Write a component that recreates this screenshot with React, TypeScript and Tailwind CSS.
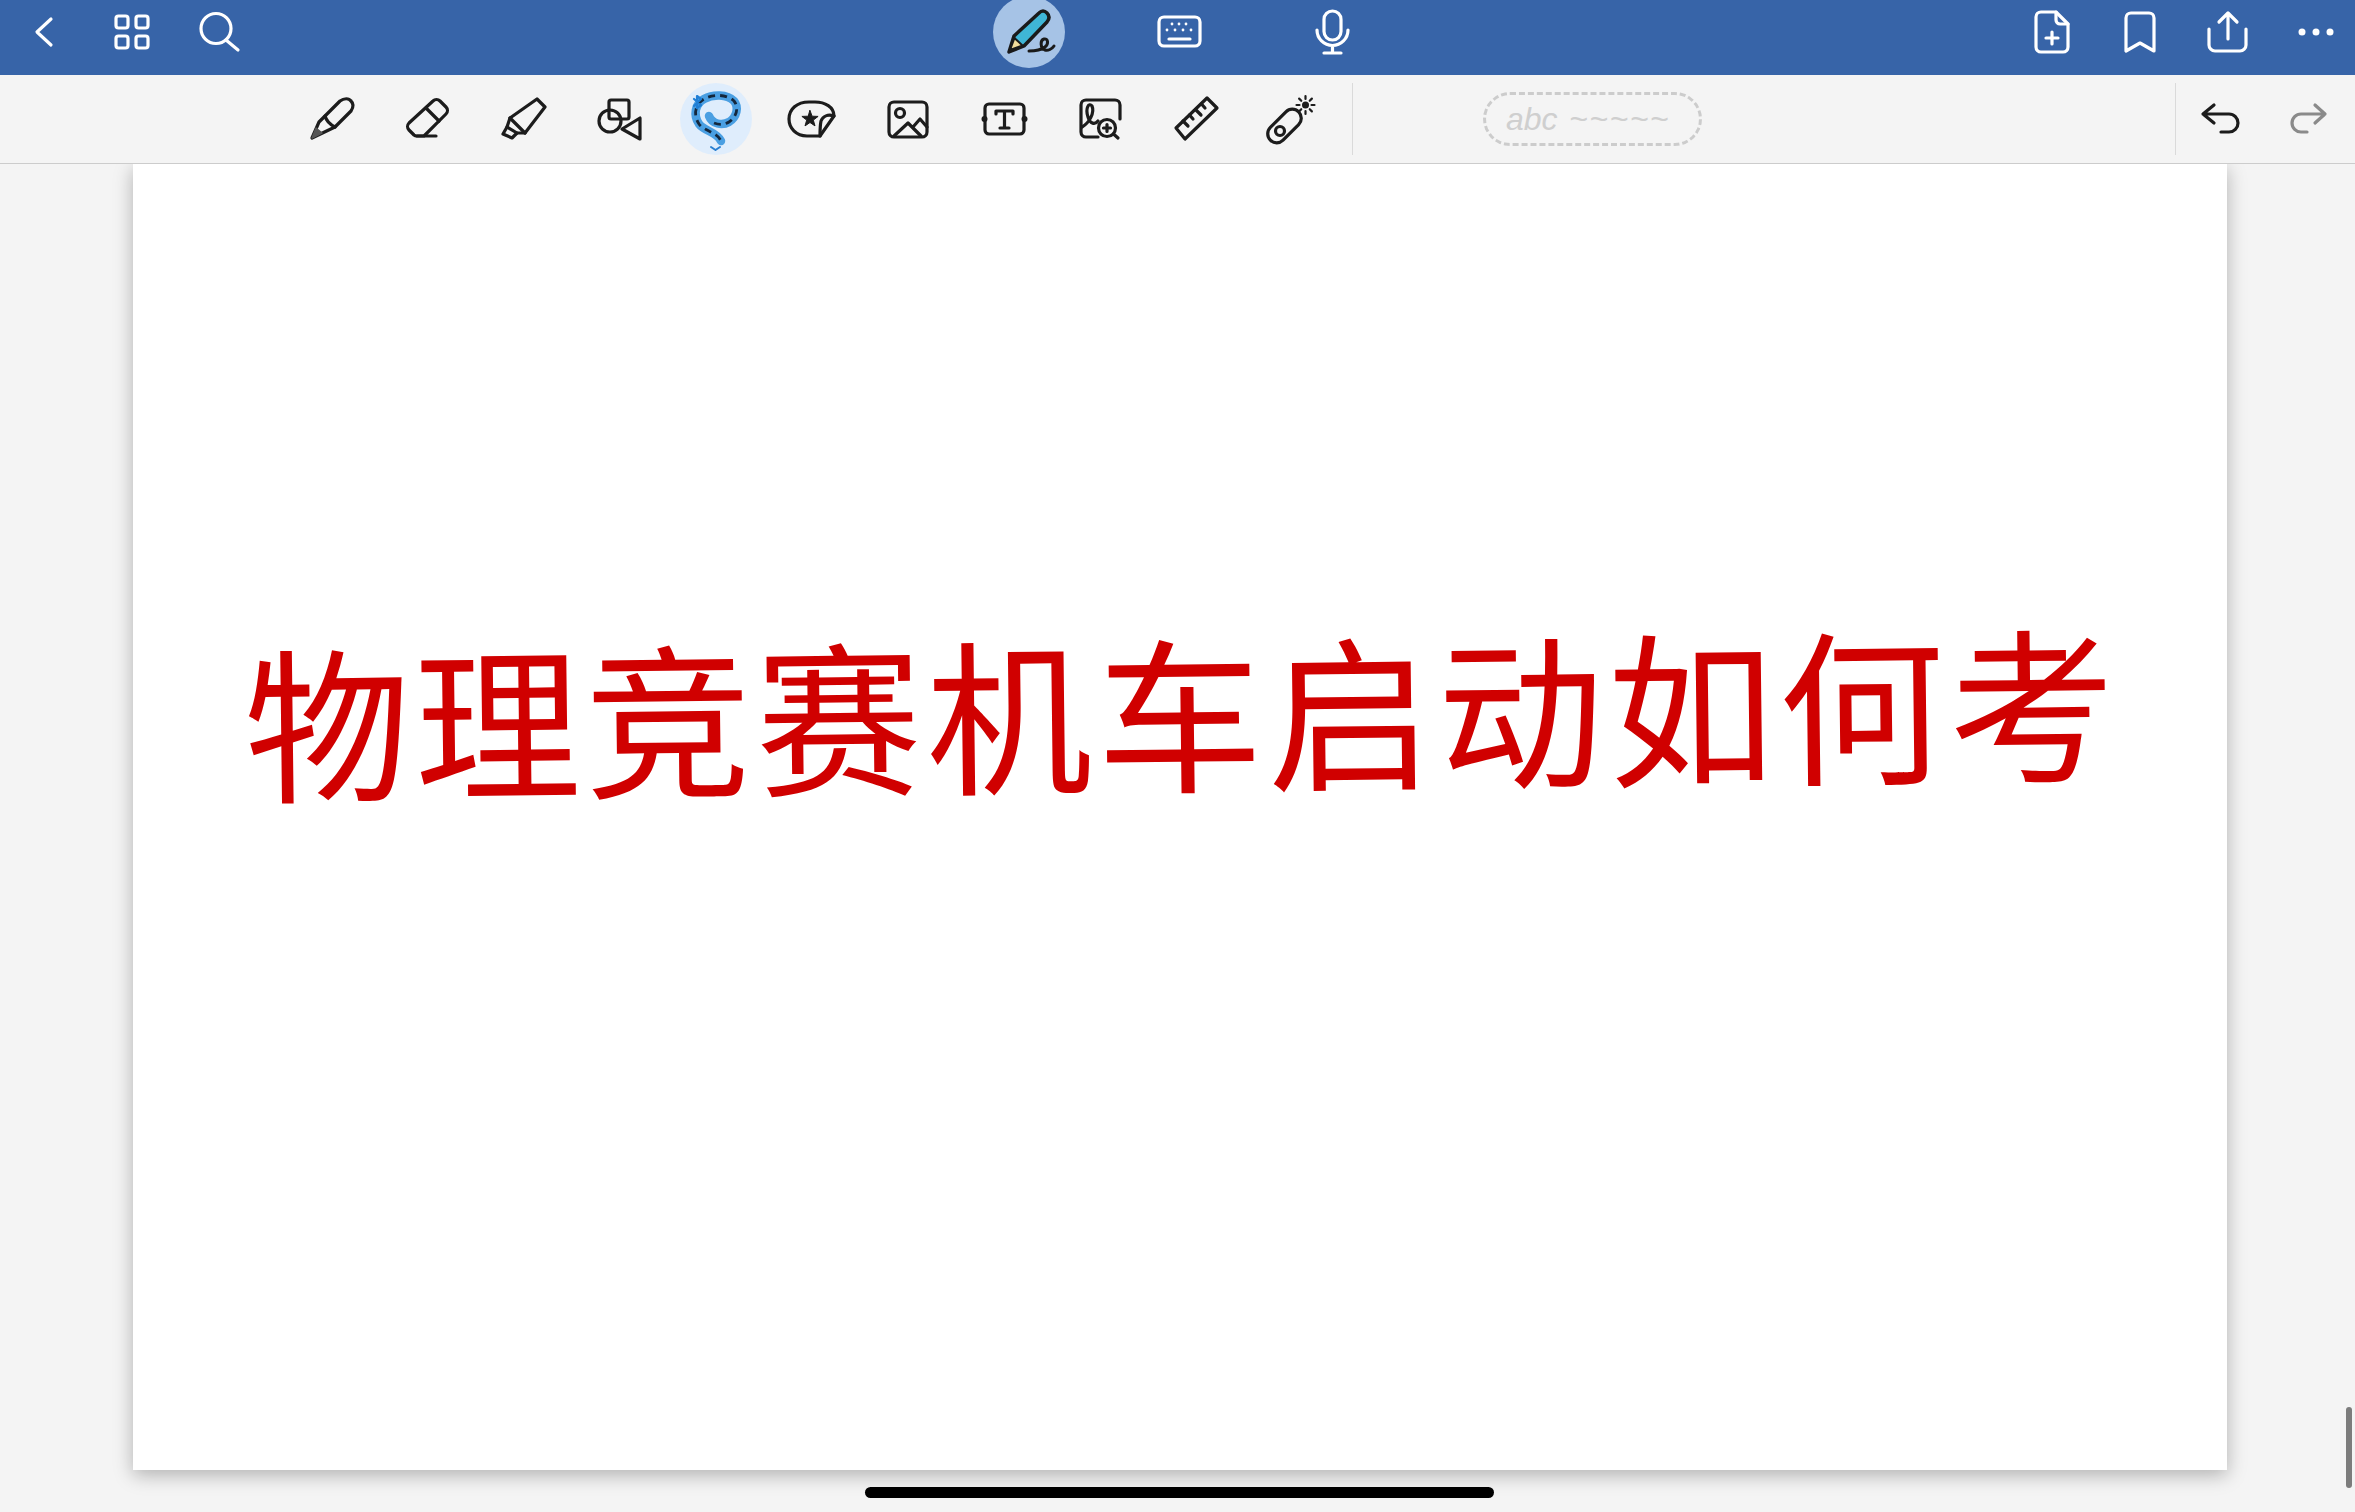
import type { ReactNode } from "react";

// every icon is drawn in a 48x48 box, centered on its slot
const Icon = ({ children, color = "#1c1c1c", w = 3.2 }: { children: ReactNode; color?: string; w?: number }) => (
  <svg
    viewBox="0 0 48 48"
    className="w-12 h-12 overflow-visible"
    fill="none"
    stroke={color}
    strokeWidth={w}
    strokeLinecap="round"
    strokeLinejoin="round"
  >
    {children}
  </svg>
);

const rays = [0, 45, 90, 135, 180, 225, 270, 315];

const toolIcons: ReactNode[] = [
  // pen
  <Icon key="pen">
    <path d="M33 6C37 3 42 3 44 6C47 9 46 13 44 16L28 32L5 43L12 27L18 21Z" />
    <path d="M18 21Q20 28 28 32" />
    <path d="M5 43L9 33L15 38Z" fill="#555" stroke="#555" strokeWidth={1.5} />
  </Icon>,
  // eraser
  <Icon key="eraser">
    <path d="M30 6a5 5 0 0 1 7 0L43 12a5 5 0 0 1 0 7L21 41H14a4 4 0 0 1-3-1L6 35a5 5 0 0 1 0-7Z" />
    <path d="M23 13L36 26M14 41H33" />
  </Icon>,
  // highlighter
  <Icon key="highlighter">
    <path d="M38 4L46 12L26 38L18 38L13 43L4 39L8 32L11 23Z" />
    <path d="M11 23L26 38M8 32L18 38" />
  </Icon>,
  // shapes
  <Icon key="shapes">
    <rect x="14" y="5" width="20" height="19" rx="2" />
    <circle cx="15" cy="26" r="11" />
    <path d="M45 23V44L27 34Z" />
  </Icon>,
  null,
  // sticker
  <Icon key="sticker">
    <path d="M33 41H20C9 41 2 33 2 24C2 14 10 7 22 7H28C38 7 47 12 47 21L33 41" />
    <path d="M47 21C41 19 36 21 34 26C33 31 33 36 33 41" />
    <polygon
      points="23,15.5 25.1,21.2 31.1,21.4 26.3,25.1 28,30.9 23,27.5 18,30.9 19.7,25.1 14.9,21.4 20.9,21.2"
      fill="#1c1c1c"
      strokeWidth={1}
    />
  </Icon>,
  // image
  <Icon key="image">
    <rect x="6" y="7" width="38" height="35" rx="5" />
    <circle cx="17" cy="18" r="4.5" />
    <path d="M11 41L25 28L38 41M30 32L37 24L44 32" />
  </Icon>,
  // text box
  <Icon key="textbox">
    <rect x="6" y="9" width="39" height="30" rx="4" />
    <circle cx="5.5" cy="24" r="3" fill="#1c1c1c" stroke="none" />
    <circle cx="45.5" cy="24" r="3" fill="#1c1c1c" stroke="none" />
    <path d="M17 19V16H34V19M25.5 16V33M21 33H30" />
  </Icon>,
  // zoom doc
  <Icon key="zoomdoc">
    <path d="M23 42H11a5 5 0 0 1-5-5V10a5 5 0 0 1 5-5H40a5 5 0 0 1 5 5V24" />
    <path d="M7 32C14 28 20 18 17 11C14 7 10 13 13 22C15 29 20 30 23 26" />
    <circle cx="32" cy="33" r="8.5" />
    <path d="M38.5 39L43 43M32 29.5V36.5M28.5 33H35.5" />
  </Icon>,
  // ruler
  <Icon key="ruler">
    <path d="M36 3L46 13L14 44L5 33Z" />
    <path d="M12 26L17 31M18.5 20L22 24M24.5 14.5L30 20M30.5 9L34 13" />
  </Icon>,
  // laser pointer
  <Icon key="laser">
    <rect x="-2.5" y="22" width="40" height="18" rx="9" transform="rotate(-45 17.5 31)" />
    <circle cx="13" cy="36" r="4.5" />
    <circle cx="38.5" cy="10" r="3.5" fill="#1c1c1c" stroke="none" />
    {rays.map((a) => (
      <line key={a} x1="44.5" y1="10" x2="47.5" y2="10" strokeWidth={2.2} transform={`rotate(${a} 38.5 10)`} />
    ))}
  </Icon>,
];

const App = () => {
  return (
    <div className="relative flex flex-col h-[1512px] overflow-hidden bg-[#f4f4f4] font-['Liberation_Sans',sans-serif]">
      {/* blue top bar */}
      <header className="relative z-20 flex items-center h-[75px] pb-3 bg-[#3764a8] overflow-hidden">
        <div className="flex items-center">
          <div className="flex justify-center w-[88px]">
            <Icon color="#fff">
              <path d="M31 11L17 24L31 37" />
            </Icon>
          </div>
          <div className="flex justify-center w-[88px]">
            <Icon color="#fff">
              <rect x="8" y="8" width="12" height="12" rx="2.5" />
              <rect x="28" y="8" width="12" height="12" rx="2.5" />
              <rect x="8" y="28" width="12" height="12" rx="2.5" />
              <rect x="28" y="28" width="12" height="12" rx="2.5" />
            </Icon>
          </div>
          <div className="flex justify-center w-[88px]">
            <Icon color="#fff">
              <circle cx="20" cy="20.5" r="15" />
              <path d="M30 32L42 42" />
            </Icon>
          </div>
        </div>

        <div className="flex items-center ml-[689px]">
          <div className="flex justify-center w-[151px]">
            <div className="w-[72px] h-[72px] rounded-full bg-[#a6c3e6]">
              <svg viewBox="0 0 72 72" className="w-[72px] h-[72px]" fill="none" strokeLinecap="round" strokeLinejoin="round">
                <path
                  d="M16 56L21 40L46 17Q50 13 54 17Q58 21 54 26L31 50Z"
                  fill="#3fb6d6"
                  stroke="#1a1a1a"
                  strokeWidth="3.5"
                />
                <path d="M17 54L21.5 42L29.5 49.5Z" fill="#f1dc9a" stroke="#1a1a1a" strokeWidth="2" />
                <path
                  d="M36 55C42 55 48 54 52 51C56 48 55 42 51 43C47 44 47 52 52 54C55 55 59 53 61 50"
                  stroke="#1a1a1a"
                  strokeWidth="3"
                />
              </svg>
            </div>
          </div>
          <div className="flex justify-center w-[151px]">
            <Icon color="#fff">
              <rect x="3" y="9" width="41" height="29" rx="5" />
              <path d="M13 31H34" />
              <g fill="#fff" stroke="none">
                <circle cx="16" cy="16" r="1.4" />
                <circle cx="23" cy="16" r="1.4" />
                <circle cx="30" cy="16" r="1.4" />
                <circle cx="11" cy="22" r="1.4" />
                <circle cx="19" cy="22" r="1.4" />
                <circle cx="27" cy="22" r="1.4" />
                <circle cx="35" cy="22" r="1.4" />
              </g>
            </Icon>
          </div>
          <div className="flex justify-center w-[151px]">
            <Icon color="#fff">
              <rect x="17" y="3" width="17" height="29" rx="8.5" />
              <path d="M10 22a15.5 15.5 0 0 0 31 0M25.5 38V45M17 45H34" />
            </Icon>
          </div>
        </div>

        <div className="flex items-center ml-[599px]">
          <div className="flex justify-center w-[88px]">
            <Icon color="#fff">
              <path d="M31 4H16a5 5 0 0 0-5 5V39a5 5 0 0 0 5 5H38a5 5 0 0 0 5-5V16Z" />
              <path d="M31 4V12a4 4 0 0 0 4 4H43M27 24V36M21 30H33" />
            </Icon>
          </div>
          <div className="flex justify-center w-[88px]">
            <Icon color="#fff">
              <path d="M13 43V10a5 5 0 0 1 5-5H36a5 5 0 0 1 5 5V43L27 35Z" />
            </Icon>
          </div>
          <div className="flex justify-center w-[88px]">
            <Icon color="#fff">
              <path d="M27 31V5M18 14L27 5L36 14" />
              <path d="M8 21V37a6 6 0 0 0 6 6H39a6 6 0 0 0 6-6V21" />
            </Icon>
          </div>
          <div className="flex justify-center w-[84px]">
            <Icon color="#fff">
              <g fill="#fff" stroke="none">
                <circle cx="15" cy="24" r="3.5" />
                <circle cx="29" cy="24" r="3.5" />
                <circle cx="43" cy="24" r="3.5" />
              </g>
            </Icon>
          </div>
        </div>
      </header>

      {/* tools row */}
      <div className="relative z-10 flex items-center h-[89px] pl-[283px] pr-1 bg-[#f4f4f4] border-b border-[#cccccc]">
        {toolIcons.map((icon, i) => (
          <div key={i} className="flex justify-center items-center w-24">
            {icon ?? (
              <div className="w-[72px] h-[72px] ml-[2px] rounded-full bg-[#dfedfc]">
                <svg viewBox="0 0 72 72" className="w-[72px] h-[72px]" fill="none" strokeLinecap="round" strokeLinejoin="round">
                  <path
                    d="M29 33C32 41 42 43 49 39C57 34 59 24 54 18C47 11 33 11 24 16C15 21 13 32 19 41C24 48 37 49 41 58"
                    stroke="#4a9fe2"
                    strokeWidth="8.5"
                  />
                  <path
                    d="M34 40C39 42 44 42 49 39C57 34 59 24 54 18C47 11 33 11 24 16C15 21 13 32 19 41C24 48 37 49 41 58"
                    stroke="#14273c"
                    strokeWidth="2.8"
                    strokeDasharray="7 5"
                    strokeLinecap="butt"
                  />
                  <path d="M14 16L21 22L17 25V13L21 16L14 23" stroke="#1f7fd6" strokeWidth="2.2" />
                  <path d="M31 64L35.5 67L40 64" stroke="#2a7fd0" strokeWidth="2" />
                </svg>
              </div>
            )}
          </div>
        ))}
        <div className="ml-[13px] w-px h-[72px] bg-[#dadada]" />
        <div className="flex items-center ml-[130px] w-[219px] h-[54px] pl-5 rounded-full border-[3px] border-dashed border-[#cccccc] text-[#cfcfcf]">
          <span className="text-[32px] italic leading-none">abc</span>
          <span className="ml-3 text-[32px] leading-none tracking-[1.5px]">~~~~~</span>
        </div>
        <div className="ml-auto w-px h-[72px] bg-[#dadada]" />
        <div className="flex justify-center w-[87px]">
          <Icon>
            <path d="M18 10L7 19L18 28M7 19H33a9 9 0 0 1 0 18H25" />
          </Icon>
        </div>
        <div className="flex justify-center w-[88px]">
          <Icon color="#8a8a8a">
            <path d="M32 10L42 19L32 28M42 19H18a9 9 0 0 0 0 18H24" />
          </Icon>
        </div>
      </div>

      {/* note page */}
      <main className="flex-1">
        <div className="flex justify-center ml-[133px] w-[2094px] h-[1306px] pt-[444px] pl-[4px] bg-white shadow-[0_5px_18px_rgba(0,0,0,0.28)]">
          <h1 className="h-fit whitespace-nowrap text-[166px] leading-[200px] tracking-[4.5px] text-[#d00000] rotate-[-0.65deg] font-['Noto_Sans_CJK_SC',sans-serif]">
            物理竞赛机车启动如何考
          </h1>
        </div>
      </main>

      {/* home indicator and scrollbar sit over the page */}
      <div className="absolute left-[865px] top-[1487px] w-[629px] h-[11px] rounded-full bg-black" />
      <div className="absolute left-[2346px] top-[1407px] w-[6px] h-[81px] rounded-full bg-[#7c7c7c]" />
    </div>
  );
};

export default App;
